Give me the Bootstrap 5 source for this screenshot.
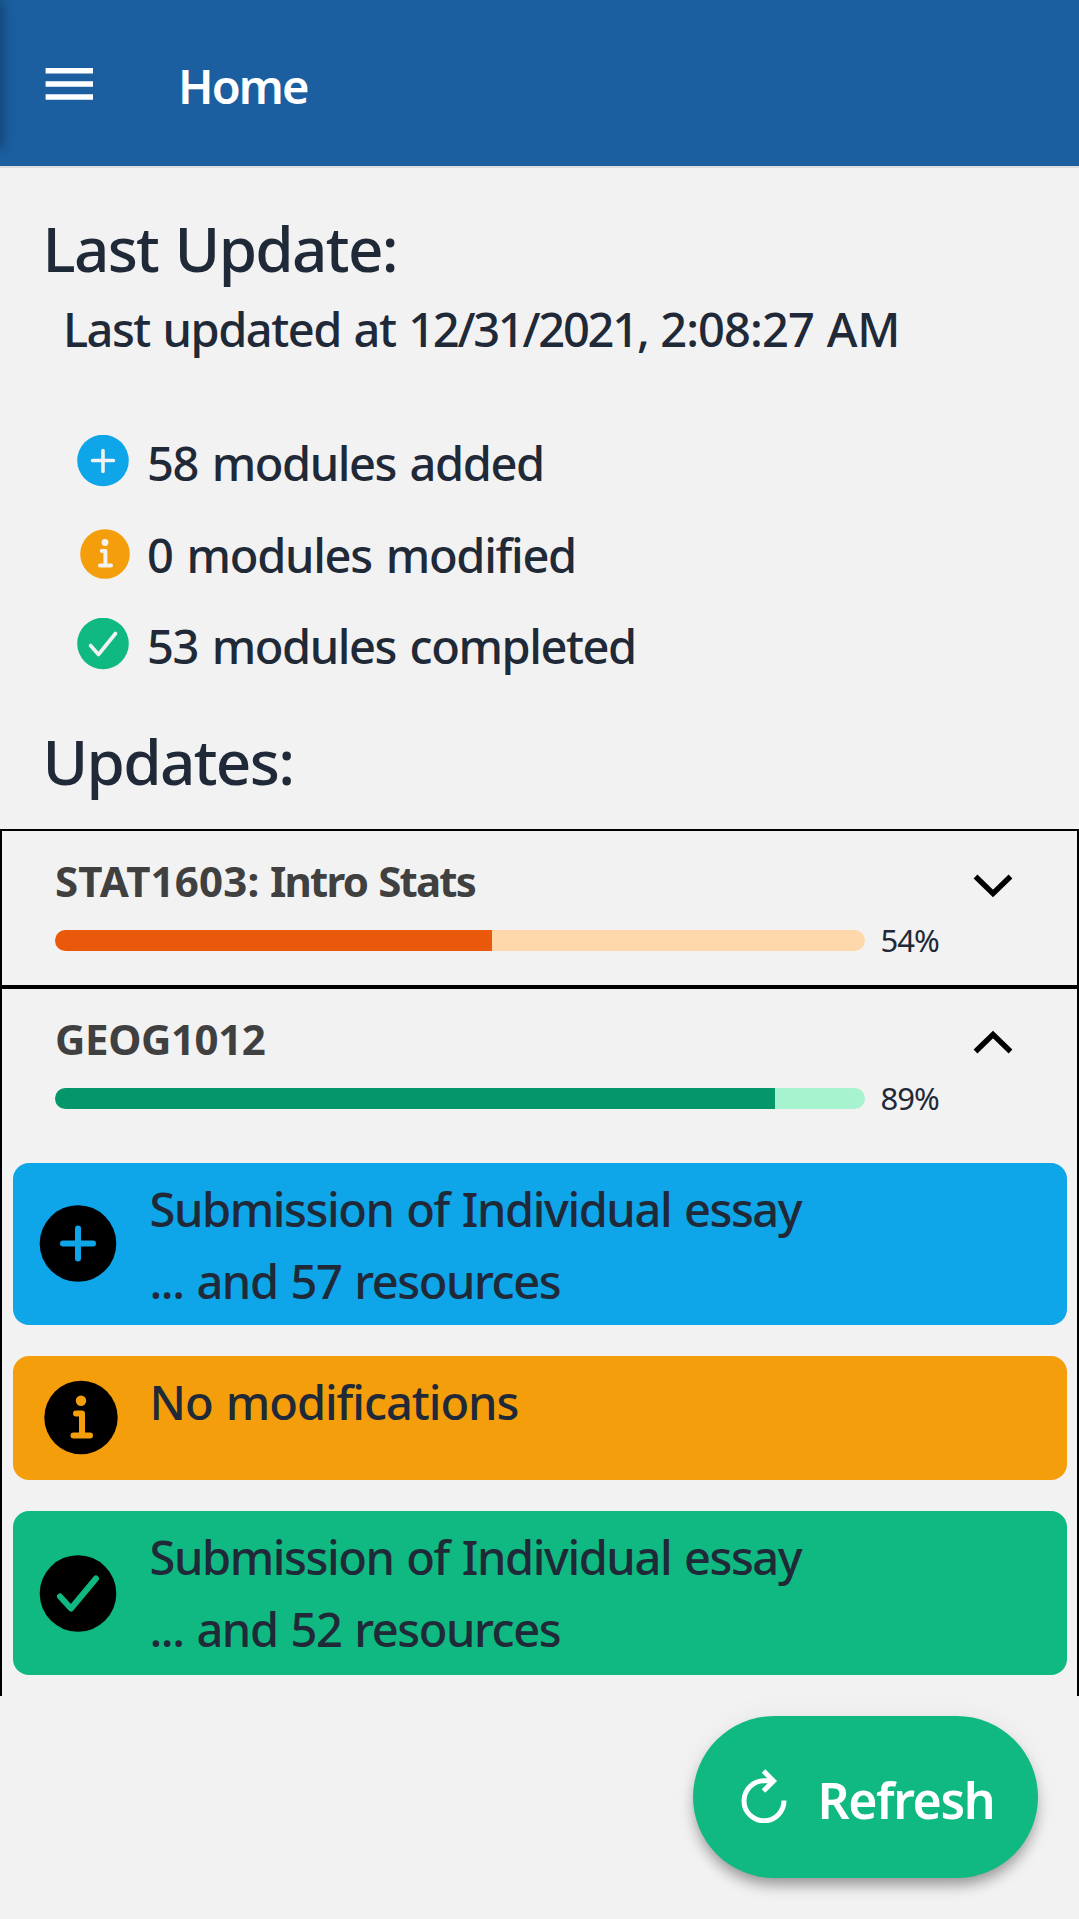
<!DOCTYPE html>
<html lang="en">
<head>
<meta charset="utf-8">
<meta name="viewport" content="width=device-width, initial-scale=1">
<title>Home</title>
<link rel="stylesheet" href="https://cdn.jsdelivr.net/npm/bootstrap@5.3.0/dist/css/bootstrap.min.css">
<script src="https://cdn.jsdelivr.net/npm/bootstrap@5.3.0/dist/js/bootstrap.bundle.min.js"></script>
<style>
body { background: #f2f2f2; color: #1f2937; font-family: "Noto Sans", "Open Sans", sans-serif; font-weight: 500; min-height: 1919px; }
svg { display: block; flex: none; }
.topbar { height: 168px; background: #1b5fa1; border-bottom: 2px solid #dcdcdc; padding-left: 45px; overflow: hidden; }
.drawer-edge { left: -10px; top: 0; width: 10px; height: 148px; box-shadow: 0 0 14px rgba(0,0,0,.5); }
.topbar .icon-menu { margin-bottom: -2px; }
.page-title { font-size: 47px; font-weight: 600; line-height: 72px; letter-spacing: -1.9px; margin: 5px 0 0 84px; }
.intro { padding-top: 41.5px; }
.updates { padding-top: 32px; }
.heading { font-size: 62px; font-weight: 500; line-height: 76px; letter-spacing: -1.7px; word-spacing: 2px; margin: 0; padding-left: 42.5px; }
.body-text { font-size: 47px; line-height: 72px; letter-spacing: -1.5px; word-spacing: 2px; margin: 0; padding: 7px 0 0 63px; }
.date { letter-spacing: -2.25px; } .time { letter-spacing: -.9px; } .ampm { letter-spacing: -.3px; }
.summary { margin: 52px 0 0; padding-left: 77px; }
.summary li { height: 91.5px; font-size: 47px; letter-spacing: -1.45px; word-spacing: 3px; }
.summary span { padding-top: 2.5px; }
.summary svg { margin-right: 18px; }
.courses { padding-top: 30px; }
.course { border: 2px solid #000; }
.course-head { height: 154px; padding: 20px 65px 0 53px; }
.course-title { font-size: 42px; font-weight: 700; line-height: 60px; letter-spacing: -.4px; color: #404040; margin: 0; }
.code { letter-spacing: .2px; }
.label { letter-spacing: -1.8px; word-spacing: 2px; }
.chevron { margin: 10px -1px 0 0; }
.course-row { height: 21px; margin-top: 19px; }
.progress { width: 810px; height: 21px; border-radius: 10.5px; }
.pct { font-size: 31px; font-weight: 400; line-height: 21px; letter-spacing: -1px; margin-left: 15.5px; }
.p-orange { background: #fed7aa; } .p-orange .progress-bar { background: #ea580c; }
.p-green { background: #a7f3d0; } .p-green .progress-bar { background: #059669; }
.update-list { padding: 20px 0 21px; }
.update { border-radius: 16px; margin: 0 10.5px 31px; padding-left: 26px; }
.update svg { margin-right: 33px; }
.update p { font-size: 47px; line-height: 72px; letter-spacing: -1.42px; word-spacing: 2px; margin: 0; }
.update-text { padding-top: 9.5px; }
.u-blue { background: #0ea5e9; height: 162px; } .u-blue svg { margin-top: 41.5px; }
.u-amber { background: #f59e0b; height: 124px; } .u-amber svg { margin-top: 23px; }
.u-green { background: #10b981; height: 163.5px; } .u-green svg { margin-top: 44px; }
.refresh { right: 41.5px; bottom: 41.5px; width: 345px; height: 162px; border-radius: 81px; background: #10b981; color: #fff; font-size: 50px; font-weight: 600; letter-spacing: -1.4px; padding: 0 0 0 48px; box-shadow: 0 9px 15px -3px rgba(0,0,0,.4), 0 0 30px rgba(0,0,0,.05); }
.refresh svg { margin-right: 31px; margin-top: -1px; }
.refresh span { padding-top: 7px; }
.refresh:hover, .refresh:active { background: #10b981; color: #fff; }
</style>
</head>
<body>
<header class="topbar d-flex align-items-center position-relative text-white">
  <span class="drawer-edge position-absolute"></span>
  <svg class="icon-menu" width="49" height="32" viewBox="0 0 49 32" fill="#fff"><path d="M.6 0h47.400v5.500H.6zM.6 13.200h47.400v5.500H.6zM.6 26.300h47.400v5.500H.6z"/></svg>
  <h1 class="page-title">Home</h1>
</header>

<main>
  <section class="intro">
    <h2 class="heading">Last Update:</h2>
    <p class="body-text">Last updated at <span class="date">12/31/2021,</span> <span class="time">2:08:27</span> <span class="ampm">AM</span></p>
    <ul class="summary list-unstyled">
      <li class="d-flex align-items-center">
        <svg width="52" height="54" viewBox="0 0 52 54"><circle cx="26" cy="25.500" r="25.800" fill="#0ea5e9"/><path d="M26 15.500v21M15.500 25.500h21" stroke="#f2f2f2" stroke-width="3.600" stroke-linecap="round"/></svg>
        <span>58 modules added</span>
      </li>
      <li class="d-flex align-items-center">
        <svg width="53" height="54" viewBox="0 0 53 54" style="margin-right:17px"><circle cx="28" cy="27" r="24.800" fill="#f59e0b"/><g fill="none" stroke="#f2f2f2" stroke-width="4" stroke-linecap="round" stroke-linejoin="round"><path d="M24.800 24h3.600v14.500M23 38.500h11"/></g><circle cx="28" cy="15.500" r="3.400" fill="#f2f2f2"/></svg>
        <span style="letter-spacing:-1.300px">0 modules modified</span>
      </li>
      <li class="d-flex align-items-center">
        <svg width="52" height="54" viewBox="0 0 52 54"><circle cx="26" cy="25.500" r="25.800" fill="#10b981"/><path d="M13.500 27.500l8 9L38.500 15.500" fill="none" stroke="#f2f2f2" stroke-width="3.600" stroke-linecap="round" stroke-linejoin="round"/></svg>
        <span>53 modules completed</span>
      </li>
    </ul>
  </section>

  <section class="updates">
    <h2 class="heading">Updates:</h2>
    <div class="courses">
      <article class="course">
        <div class="course-head">
          <div class="d-flex justify-content-between align-items-center">
            <h3 class="course-title"><span class="code">STAT1603:</span> <span class="label">Intro Stats</span></h3>
            <svg class="chevron" width="40" height="28" viewBox="0 0 40 28"><path d="M2.500 4.500L20 21.500L37.500 4.500" fill="none" stroke="#000" stroke-width="5.400"/></svg>
          </div>
          <div class="course-row d-flex align-items-center">
            <div class="progress p-orange"><div class="progress-bar" style="width:53.900%"></div></div>
            <span class="pct">54%</span>
          </div>
        </div>
      </article>
      <article class="course border-bottom-0">
        <div class="course-head">
          <div class="d-flex justify-content-between align-items-center">
            <h3 class="course-title">GEOG1012</h3>
            <svg class="chevron" width="40" height="28" viewBox="0 0 40 28"><path d="M2.500 21.500L20 4.500L37.500 21.500" fill="none" stroke="#000" stroke-width="5.400"/></svg>
          </div>
          <div class="course-row d-flex align-items-center">
            <div class="progress p-green"><div class="progress-bar" style="width:88.900%"></div></div>
            <span class="pct">89%</span>
          </div>
        </div>
        <div class="update-list">
          <div class="update u-blue d-flex">
            <svg width="78" height="78" viewBox="0 0 78 78"><circle cx="39" cy="38.500" r="38.300"/><path d="M39 23.500v30M24 38.500h30" stroke="#0ea5e9" stroke-width="6" stroke-linecap="round"/></svg>
            <div class="update-text"><p>Submission of Individual essay</p><p>... and 57 resources</p></div>
          </div>
          <div class="update u-amber d-flex">
            <svg width="79" height="78" viewBox="0 0 79 78" style="margin-right:32px"><circle cx="42" cy="38.500" r="36.700"/><path d="M37 34.500h6v22M34.500 56.500h16.500" fill="none" stroke="#f59e0b" stroke-width="6" stroke-linecap="round" stroke-linejoin="round"/><circle cx="42" cy="21.800" r="5.200" fill="#f59e0b"/></svg>
            <div class="update-text"><p style="letter-spacing:-1.050px">No modifications</p></div>
          </div>
          <div class="update u-green d-flex mb-0">
            <svg width="78" height="78" viewBox="0 0 78 78"><circle cx="39" cy="38.500" r="38.300"/><path d="M21 41.500l11 12L57 23.500" fill="none" stroke="#10b981" stroke-width="6" stroke-linecap="round" stroke-linejoin="round"/></svg>
            <div class="update-text"><p>Submission of Individual essay</p><p>... and 52 resources</p></div>
          </div>
        </div>
      </article>
    </div>
  </section>
</main>

<button type="button" class="refresh btn border-0 position-fixed d-flex align-items-center">
  <svg width="46" height="54" viewBox="0 0 46 54" fill="none" stroke="#fff" stroke-width="5"><path d="M32 11.800H23A20 20 0 1 0 43 31.500"/><path d="M22.500 2L32.500 12L22.500 22"/></svg>
  <span>Refresh</span>
</button>
</body>
</html>
